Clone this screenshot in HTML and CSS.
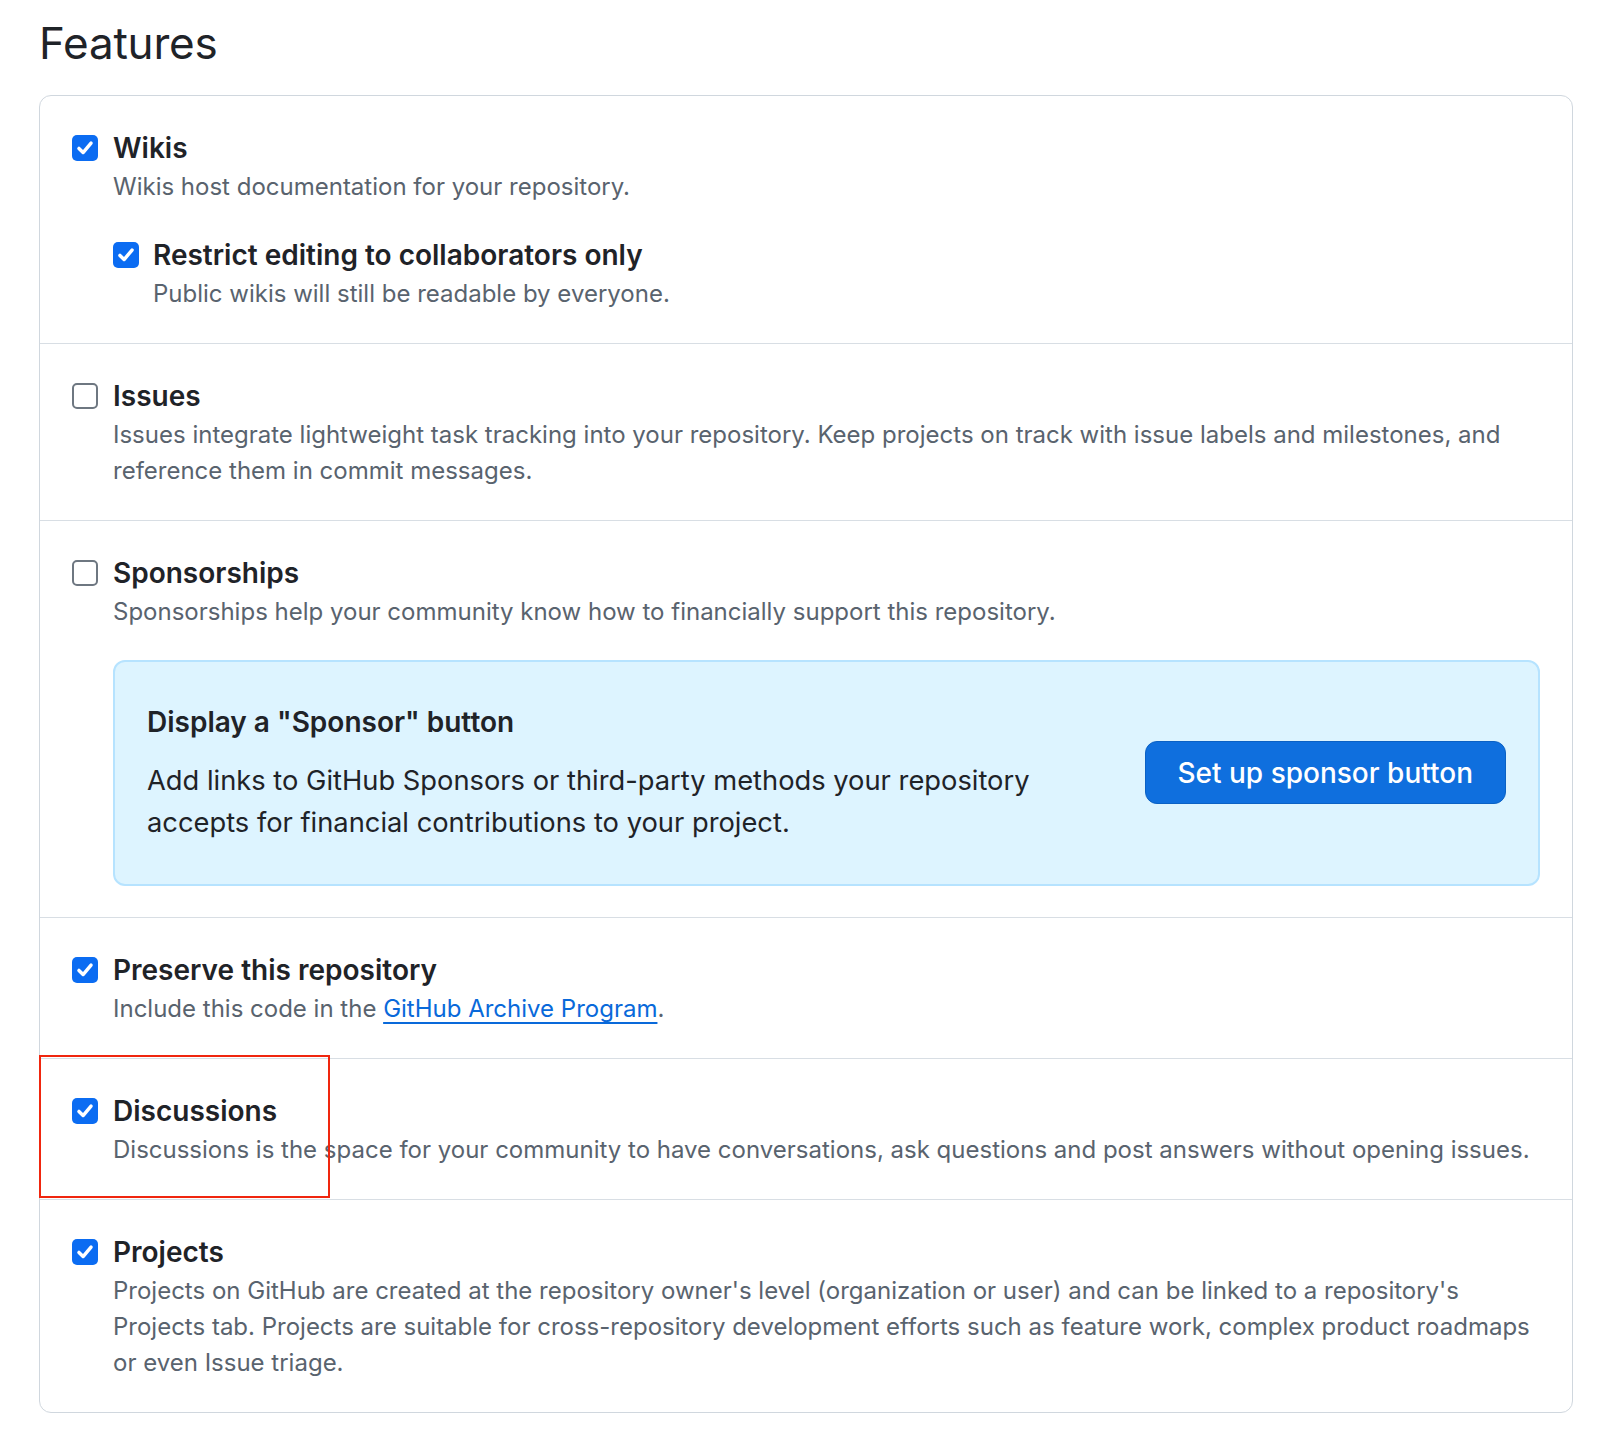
FILE: index.html
```html
<!DOCTYPE html>
<html lang="en">
<head>
<meta charset="utf-8">
<title>Features</title>
<link rel="stylesheet" href="styles.css">
</head>
<body>
<div class="page">
  <h2 class="heading">Features</h2>
  <div class="box">
    <div class="row">
      <div class="opt">
        <span class="cb checked"><svg viewBox="0 0 16 16" width="22" height="22"><path d="M3.6 8.3 6.6 11.3 12.4 4.4" fill="none" stroke="#fff" stroke-width="2.5" stroke-linecap="round" stroke-linejoin="round"/></svg></span>
        <div class="opt-body">
          <div class="opt-title">Wikis</div>
          <div class="opt-desc">Wikis host documentation for your repository.</div>
          <div class="opt sub">
            <span class="cb checked"><svg viewBox="0 0 16 16" width="22" height="22"><path d="M3.6 8.3 6.6 11.3 12.4 4.4" fill="none" stroke="#fff" stroke-width="2.5" stroke-linecap="round" stroke-linejoin="round"/></svg></span>
            <div class="opt-body">
              <div class="opt-title">Restrict editing to collaborators only</div>
              <div class="opt-desc">Public wikis will still be readable by everyone.</div>
            </div>
          </div>
        </div>
      </div>
    </div>

    <div class="row">
      <div class="opt">
        <span class="cb"></span>
        <div class="opt-body">
          <div class="opt-title">Issues</div>
          <div class="opt-desc">Issues integrate lightweight task tracking into your repository. Keep projects on track with issue labels and milestones, and reference them in commit messages.</div>
        </div>
      </div>
    </div>

    <div class="row">
      <div class="opt">
        <span class="cb"></span>
        <div class="opt-body">
          <div class="opt-title">Sponsorships</div>
          <div class="opt-desc">Sponsorships help your community know how to financially support this repository.</div>
          <div class="sponsor">
            <div class="sponsor-text">
              <h3 class="sponsor-title">Display a "Sponsor" button</h3>
              <p class="sponsor-desc">Add links to GitHub Sponsors or third-party methods your repository accepts for financial contributions to your project.</p>
            </div>
            <button class="btn-primary" type="button">Set up sponsor button</button>
          </div>
        </div>
      </div>
    </div>

    <div class="row">
      <div class="opt">
        <span class="cb checked"><svg viewBox="0 0 16 16" width="22" height="22"><path d="M3.6 8.3 6.6 11.3 12.4 4.4" fill="none" stroke="#fff" stroke-width="2.5" stroke-linecap="round" stroke-linejoin="round"/></svg></span>
        <div class="opt-body">
          <div class="opt-title">Preserve this repository</div>
          <div class="opt-desc">Include this code in the <a class="link" href="#">GitHub Archive Program</a>.</div>
        </div>
      </div>
    </div>

    <div class="row">
      <div class="opt">
        <span class="cb checked"><svg viewBox="0 0 16 16" width="22" height="22"><path d="M3.6 8.3 6.6 11.3 12.4 4.4" fill="none" stroke="#fff" stroke-width="2.5" stroke-linecap="round" stroke-linejoin="round"/></svg></span>
        <div class="opt-body">
          <div class="opt-title">Discussions</div>
          <div class="opt-desc">Discussions is the space for your community to have conversations, ask questions and post answers without opening issues.</div>
        </div>
      </div>
      <div class="annotation"></div>
    </div>

    <div class="row">
      <div class="opt">
        <span class="cb checked"><svg viewBox="0 0 16 16" width="22" height="22"><path d="M3.6 8.3 6.6 11.3 12.4 4.4" fill="none" stroke="#fff" stroke-width="2.5" stroke-linecap="round" stroke-linejoin="round"/></svg></span>
        <div class="opt-body">
          <div class="opt-title">Projects</div>
          <div class="opt-desc">Projects on GitHub are created at the repository owner's level (organization or user) and can be linked to a repository's Projects tab. Projects are suitable for cross-repository development efforts such as feature work, complex product roadmaps or even Issue triage.</div>
        </div>
      </div>
    </div>
  </div>
</div>
</body>
</html>
```

FILE: styles.css
```css
* { box-sizing: border-box; }

html, body {
  margin: 0;
  padding: 0;
  background: #ffffff;
}

body {
  font-family: Inter, "Noto Sans", "Liberation Sans", sans-serif;
  color: #1f2328;
}

.page {
  padding: 0 33px 32px 39px;
}

.heading {
  margin: 13px 0 22px 0;
  font-size: 44px;
  line-height: 60px;
  font-weight: 400;
  color: #1f2328;
  letter-spacing: -0.2px;
}

.box {
  border: 1px solid #d0d7de;
  border-radius: 12px;
}

.row {
  position: relative;
  padding: 34px 32px 31px 32px;
  border-top: 1px solid #d8dee4;
}

.row:first-child {
  border-top: 0;
}

.opt {
  display: flex;
  align-items: flex-start;
  gap: 15px;
}

.opt.sub {
  margin-top: 32px;
  gap: 14px;
}

.opt-body {
  flex: 1;
  min-width: 0;
}

.cb {
  flex: 0 0 26px;
  width: 26px;
  height: 26px;
  margin-top: 5px;
  border-radius: 5px;
  border: 2px solid #6e7781;
  background: #ffffff;
  display: flex;
  align-items: center;
  justify-content: center;
}

.cb.checked {
  border: 0;
  background: #0b6cf2;
}

.opt-title {
  font-size: 28px;
  line-height: 36px;
  font-weight: 600;
  color: #1f2328;
}

.opt-desc {
  margin-top: 3px;
  font-size: 24px;
  line-height: 36px;
  color: #59636e;
}

.link {
  color: #0969da;
  text-decoration: underline;
  text-underline-offset: 5px;
  text-decoration-thickness: 2px;
}

.sponsor {
  margin-top: 30px;
  display: flex;
  align-items: center;
  gap: 32px;
  padding: 39px 32px 40px 32px;
  background: #ddf4ff;
  border: 2px solid #b6e3ff;
  border-radius: 12px;
}

.sponsor-text {
  flex: 1;
  min-width: 0;
}

.sponsor-title {
  margin: 0;
  font-size: 28px;
  line-height: 42px;
  font-weight: 600;
  color: #1f2328;
}

.sponsor-desc {
  margin: 17px 0 0 0;
  font-size: 27.3px;
  line-height: 42px;
  color: #1f2328;
}

.btn-primary {
  flex: 0 0 auto;
  height: 63px;
  padding: 0 32px;
  font-family: inherit;
  font-size: 28px;
  font-weight: 500;
  color: #ffffff;
  background: #0f6fde;
  border: 1px solid #0b61c4;
  border-radius: 12px;
}

.annotation {
  position: absolute;
  left: -1px;
  top: -4px;
  width: 291px;
  height: 143px;
  border: 2px solid #f0260e;
  pointer-events: none;
}
```
